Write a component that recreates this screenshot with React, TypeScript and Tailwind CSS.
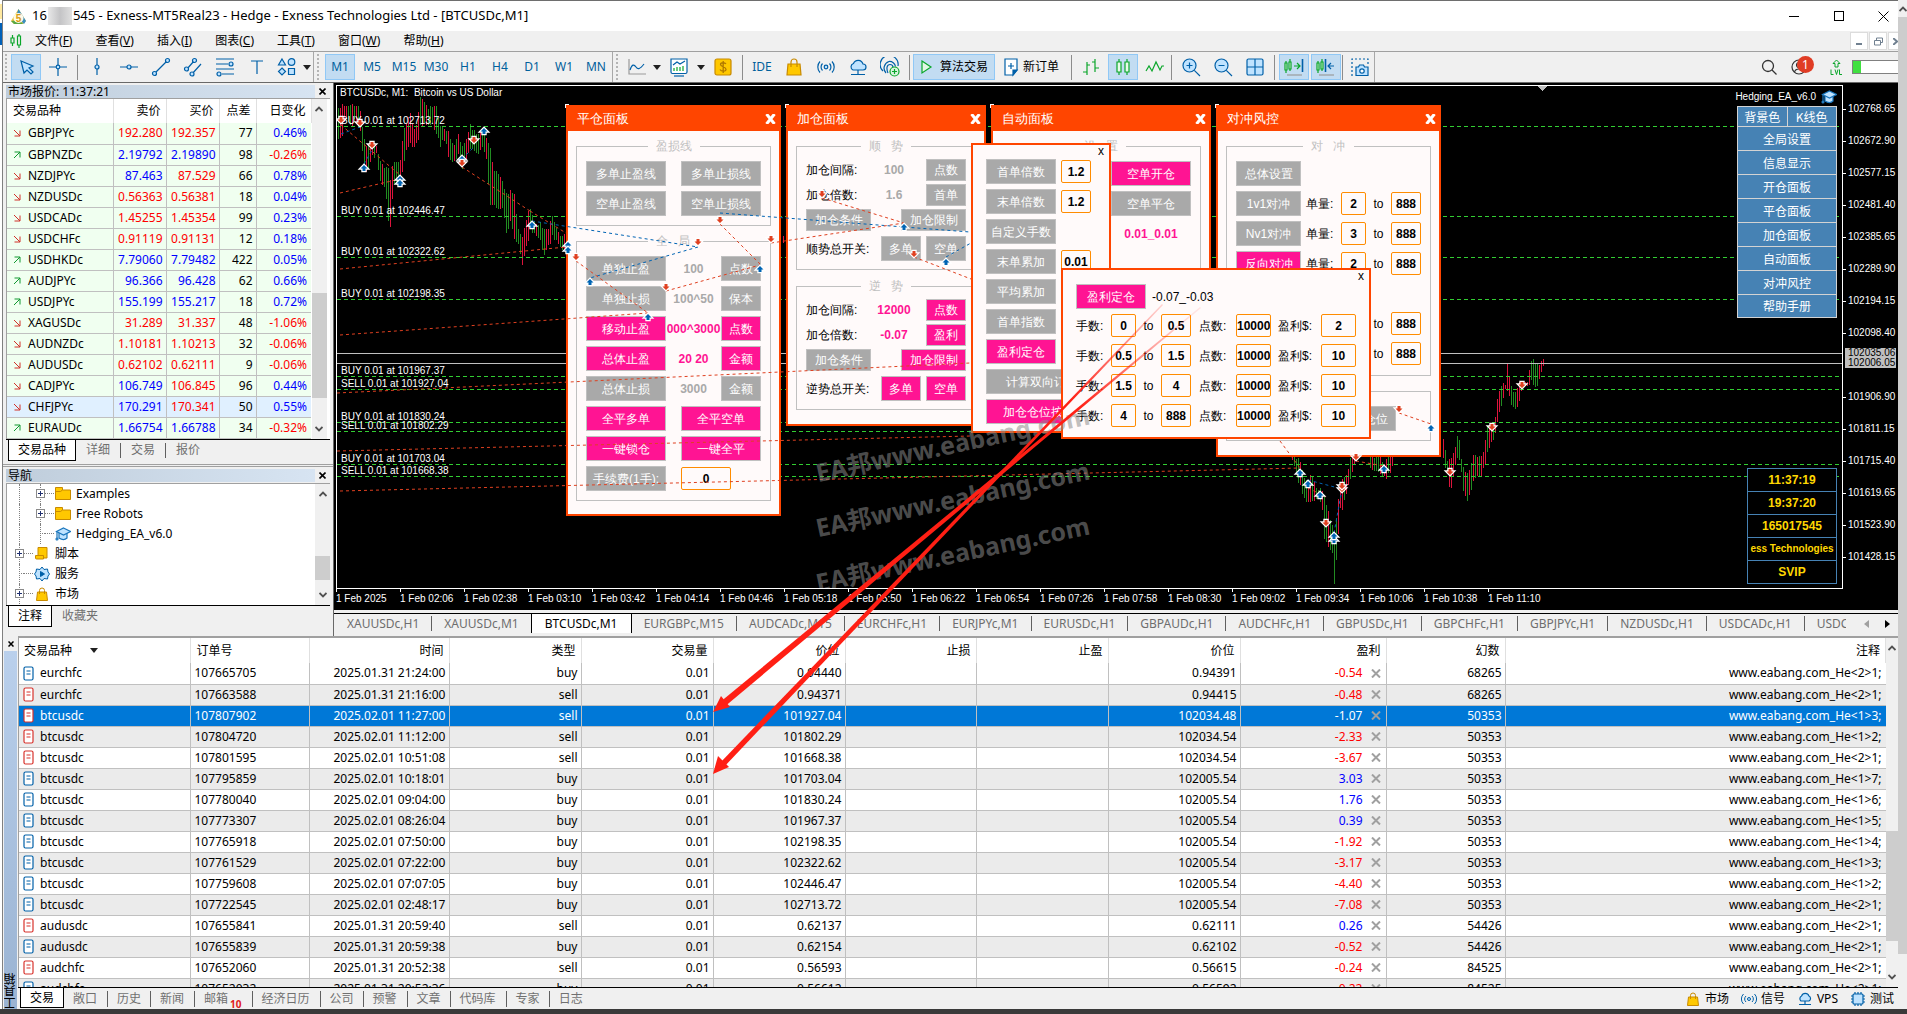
import React from 'react';

const BLUE = '#0060a8';
const PALE = '#bfe3ff';
const GREEN = '#0aa62a';

/* ---------- data ---------- */

type Quote = [string, boolean, string, string, string, string, string, string];
// symbol, rising, bid, ask, spread, change, bid colour, ask colour
const quotes: Quote[] = [
  ['GBPJPYc', false, '192.280', '192.357', '77', '0.46%', 'r', 'r'],
  ['GBPNZDc', true, '2.19792', '2.19890', '98', '-0.26%', 'b', 'b'],
  ['NZDJPYc', false, '87.463', '87.529', '66', '0.78%', 'b', 'r'],
  ['NZDUSDc', false, '0.56363', '0.56381', '18', '0.04%', 'r', 'r'],
  ['USDCADc', false, '1.45255', '1.45354', '99', '0.23%', 'r', 'r'],
  ['USDCHFc', false, '0.91119', '0.91131', '12', '0.18%', 'r', 'r'],
  ['USDHKDc', true, '7.79060', '7.79482', '422', '0.05%', 'b', 'b'],
  ['AUDJPYc', true, '96.366', '96.428', '62', '0.66%', 'b', 'b'],
  ['USDJPYc', true, '155.199', '155.217', '18', '0.72%', 'b', 'b'],
  ['XAGUSDc', false, '31.289', '31.337', '48', '-1.06%', 'r', 'r'],
  ['AUDNZDc', false, '1.10181', '1.10213', '32', '-0.06%', 'r', 'r'],
  ['AUDUSDc', false, '0.62102', '0.62111', '9', '-0.06%', 'r', 'r'],
  ['CADJPYc', false, '106.749', '106.845', '96', '0.44%', 'b', 'r'],
  ['CHFJPYc', false, '170.291', '170.341', '50', '0.55%', 'b', 'r'],
  ['EURAUDc', true, '1.66754', '1.66788', '34', '-0.32%', 'b', 'b'],
];

type Trade = [string, string, string, string, string, string, string, string, string];
// symbol, ticket, time, type, open price, current price, profit, magic, comment suffix
const trades: Trade[] = [
  ['eurchfc', '107665705', '2025.01.31 21:24:00', 'buy', '0.94440', '0.94391', '-0.54', '68265', '<2>1;'],
  ['eurchfc', '107663588', '2025.01.31 21:16:00', 'sell', '0.94371', '0.94415', '-0.48', '68265', '<2>1;'],
  ['btcusdc', '107807902', '2025.02.01 11:27:00', 'sell', '101927.04', '102034.48', '-1.07', '50353', '<1>3;'],
  ['btcusdc', '107804720', '2025.02.01 11:12:00', 'sell', '101802.29', '102034.54', '-2.33', '50353', '<1>2;'],
  ['btcusdc', '107801595', '2025.02.01 10:51:08', 'sell', '101668.38', '102034.54', '-3.67', '50353', '<2>1;'],
  ['btcusdc', '107795859', '2025.02.01 10:18:01', 'buy', '101703.04', '102005.54', '3.03', '50353', '<1>7;'],
  ['btcusdc', '107780040', '2025.02.01 09:04:00', 'buy', '101830.24', '102005.54', '1.76', '50353', '<1>6;'],
  ['btcusdc', '107773307', '2025.02.01 08:26:04', 'buy', '101967.37', '102005.54', '0.39', '50353', '<1>5;'],
  ['btcusdc', '107765918', '2025.02.01 07:50:00', 'buy', '102198.35', '102005.54', '-1.92', '50353', '<1>4;'],
  ['btcusdc', '107761529', '2025.02.01 07:22:00', 'buy', '102322.62', '102005.54', '-3.17', '50353', '<1>3;'],
  ['btcusdc', '107759608', '2025.02.01 07:07:05', 'buy', '102446.47', '102005.54', '-4.40', '50353', '<1>2;'],
  ['btcusdc', '107722545', '2025.02.01 02:48:17', 'buy', '102713.72', '102005.54', '-7.08', '50353', '<2>1;'],
  ['audusdc', '107655841', '2025.01.31 20:59:40', 'sell', '0.62137', '0.62111', '0.26', '54426', '<2>1;'],
  ['audusdc', '107655839', '2025.01.31 20:59:38', 'buy', '0.62154', '0.62102', '-0.52', '54426', '<2>1;'],
  ['audchfc', '107652060', '2025.01.31 20:52:38', 'sell', '0.56593', '0.56615', '-0.24', '84525', '<2>1;'],
  ['audchfc', '107652032', '2025.01.31 20:52:36', 'buy', '0.56612', '0.56592', '-0.22', '84525', '<2>1;'],
];

const orderLines: [number, number, string][] = [
  [127, 125, 'BUY 0.01 at 102713.72'],
  [217, 215, 'BUY 0.01 at 102446.47'],
  [258, 256, 'BUY 0.01 at 102322.62'],
  [300, 298, 'BUY 0.01 at 102198.35'],
  [377, 375, 'BUY 0.01 at 101967.37'],
  [390, 388, 'SELL 0.01 at 101927.04'],
  [423, 421, 'BUY 0.01 at 101830.24'],
  [432, 430, 'SELL 0.01 at 101802.29'],
  [465, 463, 'BUY 0.01 at 101703.04'],
  [477, 475, 'SELL 0.01 at 101668.38'],
];

const priceTicks = [
  '102768.65', '102672.90', '102577.15', '102481.40', '102385.65', '102289.90', '102194.15', '102098.40',
  '', '101906.90', '101811.15', '101715.40', '101619.65', '101523.90', '101428.15',
];

const timeTicks = [
  '1 Feb 2025', '1 Feb 02:06', '1 Feb 02:38', '1 Feb 03:10', '1 Feb 03:42', '1 Feb 04:14', '1 Feb 04:46',
  '1 Feb 05:18', '1 Feb 05:50', '1 Feb 06:22', '1 Feb 06:54', '1 Feb 07:26', '1 Feb 07:58', '1 Feb 08:30',
  '1 Feb 09:02', '1 Feb 09:34', '1 Feb 10:06', '1 Feb 10:38', '1 Feb 11:10',
];

// price envelope: x, high, low
const envelopes: [number, number, number][][] = [
  [
    [338, 107, 140], [342, 105, 139], [345, 107, 120], [350, 103, 130], [355, 108, 123], [357, 103, 120],
    [360, 110, 132], [363, 133, 163], [365, 147, 178], [368, 145, 172], [372, 143, 160], [376, 147, 158],
    [380, 160, 183], [385, 168, 190], [388, 168, 225], [390, 180, 230], [393, 158, 190], [397, 165, 185],
    [400, 160, 187], [403, 130, 167], [406, 122, 152], [410, 113, 147], [413, 130, 152], [417, 120, 147],
    [420, 98, 130], [423, 100, 125], [428, 107, 127], [432, 107, 128], [436, 105, 138], [440, 127, 148],
    [445, 130, 140], [448, 130, 158], [453, 148, 167], [458, 133, 158], [462, 147, 170], [465, 143, 162],
    [470, 123, 150], [473, 130, 152], [477, 135, 158], [481, 130, 152], [485, 137, 153], [490, 147, 207],
    [493, 168, 205], [497, 173, 213], [502, 180, 212], [507, 197, 240], [510, 190, 222], [514, 193, 240],
    [518, 230, 247], [522, 237, 268], [527, 213, 247], [530, 210, 233], [535, 223, 235], [540, 223, 243],
    [543, 230, 260], [548, 227, 250], [552, 217, 240], [557, 230, 243], [562, 237, 253], [566, 230, 253],
  ],
  [
    [1292, 452, 463], [1299, 460, 487], [1305, 480, 503], [1311, 475, 505], [1316, 487, 503], [1321, 490, 503],
    [1324, 497, 540], [1328, 510, 548], [1333, 530, 558], [1334, 540, 588], [1337, 507, 550], [1340, 480, 513],
    [1343, 480, 510], [1347, 473, 490], [1350, 457, 480], [1354, 447, 468],
  ],
  [
    [1370, 455, 470], [1380, 457, 477], [1383, 463, 482], [1389, 457, 477], [1393, 456, 465],
  ],
  [
    [1443, 440, 463], [1447, 460, 475], [1450, 457, 495], [1454, 453, 473], [1458, 430, 457], [1461, 457, 477],
    [1464, 473, 500], [1467, 473, 502], [1470, 467, 495], [1473, 453, 483], [1476, 457, 480], [1481, 455, 480],
    [1484, 448, 470], [1487, 427, 457], [1490, 427, 445], [1494, 422, 440], [1498, 393, 420], [1503, 382, 402],
    [1505, 383, 393], [1507, 365, 392], [1510, 383, 405], [1514, 393, 410], [1518, 383, 408], [1522, 382, 390],
    [1527, 380, 387], [1532, 358, 385], [1536, 363, 390], [1540, 363, 378], [1543, 359, 370],
  ],
];

function buildBars() {
  const bars: { x: number; a: number; b: number; up: boolean }[] = [];
  envelopes.forEach((pts) => {
    const first = pts[0][0];
    const last = pts[pts.length - 1][0];
    let i = 0;
    for (let x = first; x <= last; x += 2) {
      while (i < pts.length - 2 && pts[i + 1][0] < x) i += 1;
      const [x0, h0, l0] = pts[i];
      const [x1, h1, l1] = pts[i + 1];
      const t = Math.min(1, Math.max(0, (x - x0) / (x1 - x0)));
      const mid = (h0 + l0) / 2;
      const falling = (h1 + l1) / 2 > mid;
      const n = (x * 37) % 11;
      const a = Math.round(h0 + (h1 - h0) * t + (n % 4));
      const b = Math.round(l0 + (l1 - l0) * t - ((n * 3) % 5));
      bars.push({ x, a, b: Math.max(b, a + 4), up: n > 7 ? falling : !falling });
    }
  });
  return bars;
}
const bars = buildBars();

type Line = [number, number, number, number, 'r' | 'b'];
const dealLines: Line[] = [
  [341, 126, 400, 176, 'r'], [340, 194, 400, 180, 'r'], [341, 135, 360, 128, 'b'], [364, 165, 372, 151, 'b'],
  [462, 168, 530, 212, 'r'], [530, 212, 566, 234, 'r'], [462, 160, 474, 148, 'b'],
  [340, 270, 566, 248, 'r'], [340, 336, 648, 314, 'r'], [337, 394, 970, 364, 'r'], [337, 452, 971, 437, 'r'],
  [340, 492, 1300, 469, 'r'], [532, 222, 698, 248, 'b'], [698, 248, 590, 279, 'b'], [720, 214, 970, 233, 'b'],
  [720, 225, 760, 265, 'r'], [576, 262, 648, 314, 'r'], [666, 292, 760, 266, 'r'], [771, 244, 904, 224, 'r'],
  [822, 199, 904, 224, 'r'], [914, 258, 971, 280, 'r'], [946, 258, 971, 244, 'b'], [1399, 414, 1431, 425, 'r'],
  [1280, 442, 1300, 469, 'r'], [1356, 462, 1384, 467, 'r'], [1308, 481, 1342, 490, 'b'], [1342, 490, 1334, 534, 'b'],
  [1308, 489, 1326, 498, 'r'],
];

const deals: [number, number, 'r' | 'b'][] = [
  [341, 121, 'r'], [360, 124, 'r'], [372, 146, 'r'], [474, 141, 'r'], [698, 243, 'r'],
  [576, 258, 'r'], [666, 288, 'r'], [720, 221, 'r'], [771, 240, 'r'], [364, 169, 'b'], [400, 180, 'b'],
  [400, 184, 'b'], [462, 160, 'b'], [462, 164, 'r'], [484, 132, 'b'], [532, 226, 'b'], [568, 246, 'b'], [568, 251, 'b'],
  [590, 283, 'b'], [648, 318, 'b'], [760, 270, 'b'], [822, 195, 'r'], [904, 228, 'b'], [914, 255, 'r'],
  [946, 263, 'b'], [1399, 410, 'r'], [1431, 429, 'b'], [1356, 458, 'r'], [1300, 474, 'b'], [1308, 485, 'b'],
  [1320, 496, 'b'], [1326, 524, 'r'], [1334, 541, 'b'], [1334, 537, 'b'], [1342, 490, 'r'], [1342, 487, 'r'],
  [1384, 470, 'b'], [1450, 473, 'r'], [1492, 428, 'r'], [1522, 386, 'r'],
];

/* ---------- icons ---------- */

function Svg({ w = 20, h = 20, children }: { w?: number; h?: number; children: React.ReactNode }) {
  return (
    <svg width={w} height={h} viewBox={`0 0 ${w} ${h}`} fill="none" stroke={BLUE} strokeWidth="1.2" className="shrink-0">
      {children}
    </svg>
  );
}

const Ico = {
  cursor: <Svg><path d="M5 4l3 12 3-3 4 4 2-2-4-4 4-2z" fill={PALE} /></Svg>,
  cross: <Svg><path d="M10 1v7M10 12v7M1 10h7M12 10h7" /><circle cx="10" cy="10" r="1.8" fill={PALE} /></Svg>,
  vline: <Svg><path d="M10 1v7M10 12v6" /><circle cx="10" cy="10" r="2" fill={PALE} /></Svg>,
  hline: <Svg><path d="M1 10h7M12 10h7" /><circle cx="10" cy="10" r="2" fill={PALE} /></Svg>,
  trend: <Svg><path d="M4 16L16 4" /><circle cx="3.5" cy="16.5" r="2" fill={PALE} /><circle cx="16.5" cy="3.5" r="2" fill={PALE} /></Svg>,
  channel: <Svg><path d="M4 12l7-8M9 17l9-10" /><circle cx="3.5" cy="12" r="2" fill={PALE} /><circle cx="11.5" cy="3.5" r="2" fill={PALE} /><circle cx="9" cy="17" r="2" fill={PALE} /></Svg>,
  fibo: <Svg><path d="M1 2h18M1 7h12M1 12h18M7 17h12" /><circle cx="16" cy="7" r="2" fill={PALE} /><circle cx="4" cy="17" r="2" fill={PALE} /></Svg>,
  text: <Svg><path d="M4 4h12M10 4v13" /></Svg>,
  shapes: <Svg><path d="M5 2l3.5 6h-7z" fill={PALE} /><circle cx="14.5" cy="5" r="3.3" fill={PALE} /><path d="M5 11l3.500 3.500L5 18l-3.500-3.500z" fill={PALE} /><path d="M11.500 11.500h6v6h-6z" fill={PALE} /></Svg>,
  linechart: <Svg><path d="M2 2v15h17" stroke="#9a9a9a" /><path d="M3 13c2-6 4-6 6-3s4 2 8-3" /></Svg>,
  indicator: <Svg><path d="M2 2h16v13a1.500 1.500 0 0 1-1.500 1.500h-13A1.500 1.500 0 0 1 2 15z" fill="#fff" /><path d="M4 8l4-3 3 2 5-3" /><path d="M5 14v-3M8 14v-4M11 14v-4M14 14V9" stroke={GREEN} /><path d="M5 19h10" /></Svg>,
  dollar: <Svg><rect x="2" y="2" width="16" height="16" rx="2" fill="#ffc800" stroke="#c88a00" /><path d="M13 7c-1-1.500-5.500-2-5.500.500S13 9.500 13 12.300s-5 2-6 .200M10.200 4v12" stroke="#b07800" strokeWidth="1.300" /></Svg>,
  bag: <Svg w={16}><path d="M2 7h12l1 11H1z" fill="#ffc800" stroke="#c88a00" /><path d="M5 10V5a3 3 0 0 1 6 0v5" stroke="#c88a00" /></Svg>,
  signal: <Svg><circle cx="10" cy="10" r="1.800" fill={PALE} /><path d="M6.500 6.500a5 5 0 0 0 0 7M13.500 6.500a5 5 0 0 1 0 7M4 4.500a8 8 0 0 0 0 11M16 4.500a8 8 0 0 1 0 11" /></Svg>,
  cloud: <Svg><path d="M5 13a3.500 3.500 0 0 1 .500-6.500 5 5 0 0 1 9.500.500 3 3 0 0 1 0 6z" fill={PALE} /><path d="M10 13v4M3 17.500h14" /></Svg>,
  finger: <Svg><path d="M3 14a9 9 0 1 1 15-5M6 16A7 7 0 0 1 9 4.500a6 6 0 0 1 6.500 5M8 16c-2-5-1-8.500 2-8.500 2 0 3 1 3 3" /><circle cx="14.500" cy="14.500" r="4.500" fill="#d9f5df" stroke={GREEN} /><path d="M14.500 12v5M12 14.500h5" stroke={GREEN} /></Svg>,
  play: <Svg w={16}><path d="M4 4l9 6-9 6z" fill="#e4f8e4" stroke={GREEN} /></Svg>,
  order: <Svg w={16}><path d="M2 2h12v11l-4 5H2z" fill="#fff" /><path d="M10 18v-5h4z" fill={BLUE} /><path d="M8 6v6M5 9h6" /></Svg>,
  bars: <Svg><path d="M6 5v13M6 15H2M6 8h3M14 2v13M14 5h-3M14 11h4" stroke={GREEN} /></Svg>,
  candles: <Svg><path d="M6 2v16M14 2v16" stroke={GREEN} /><path d="M4 5h4v10H4zM12 5h4v10h-4z" fill="#e9fbe9" stroke={GREEN} /></Svg>,
  zigzag: <Svg><path d="M1 14l3-5 3 5 4-9 4 8 2-4h2" stroke={GREEN} /></Svg>,
  zoomIn: <Svg><circle cx="8.500" cy="8.500" r="6.500" fill={PALE} /><path d="M13.300 13.300L19 19M5.500 8.500h6M8.500 5.500v6" /></Svg>,
  zoomOut: <Svg><circle cx="8.500" cy="8.500" r="6.500" fill={PALE} /><path d="M13.300 13.300L19 19M5.500 8.500h6" /></Svg>,
  grid: <Svg><rect x="2" y="2" width="16" height="16" rx="1.500" fill={PALE} /><path d="M10 2v16M2 10h16" /></Svg>,
  scrollEnd: <Svg w={22}><path d="M3 4v12M7 2v12" stroke={GREEN} /><path d="M2 6h2v7H2zM6 5h2v7H6z" fill="#e9fbe9" stroke={GREEN} /><path d="M11 9h6M14 6l3 3-3 3" stroke={GREEN} /><path d="M19.500 2v13" strokeWidth="1.600" /><path d="M4 18h15" stroke="#9a9a9a" /></Svg>,
  shift: <Svg w={22}><path d="M3 4v12M7 2v12" stroke={GREEN} /><path d="M2 6h2v7H2zM6 5h2v7H6z" fill="#e9fbe9" stroke={GREEN} /><path d="M10.500 2v13" strokeWidth="1.600" /><path d="M13 9h6M16 6l-3 3 3 3" /><path d="M4 18h15" stroke="#9a9a9a" /></Svg>,
  camera: <Svg><path d="M2 19V2h16v5" strokeDasharray="2 2" /><path d="M6 10h2.500l1-2h4l1 2H18v8.500H6z" fill={PALE} /><circle cx="12" cy="14" r="2.200" fill="#fff" /></Svg>,
};

function CapIcon() {
  return (
    <svg width="16" height="14" viewBox="0 0 16 14" fill={PALE} stroke="#1a76bd" strokeWidth="1.2" className="shrink-0">
      <path d="M4 6v5c3 2 6 2 8 0V6" />
      <path d="M8.500 1L15.500 4.500 8.500 8 1.500 4.500z" />
      <path d="M2 5v6" />
      <circle cx="2" cy="12" r="1" />
    </svg>
  );
}
function FolderIcon() {
  return (
    <svg width="16" height="13" viewBox="0 0 16 13" fill="#ffc800" stroke="#c88a00" className="shrink-0">
      <path d="M.500.500h7v2.500h8v9.500h-15z" />
      <path d="M.500 4.500h5l2-1.500" fill="none" />
    </svg>
  );
}
function ScriptIcon() {
  return (
    <svg width="14" height="13" viewBox="0 0 14 13" fill="#ffc800" stroke="#c88a00" className="shrink-0">
      <path d="M3 .500h9V11H3z" />
      <path d="M.500 8.500h8V12h-7a1 1 0 0 1-1-1z" />
    </svg>
  );
}
function ServiceIcon() {
  return (
    <svg width="16" height="16" viewBox="0 0 16 16" fill={PALE} stroke={BLUE} className="shrink-0">
      <path d="M8 1l2 2.500 3.500-.500.500 3L15.500 8 14 10l-.500 3-3.500-.500L8 15l-2-2.500-3.500.500L2 10 .500 8 2 6l.500-3 3.500.500z" />
      <path d="M6.500 5.500l4 2.500-4 2.500z" fill={BLUE} />
    </svg>
  );
}
function SmallBag() {
  return (
    <svg width="12" height="14" viewBox="0 0 12 14" fill="#ffc800" stroke="#c88a00" className="shrink-0">
      <path d="M1.500 5h9l1 8.500H.500z" />
      <path d="M3.500 7V3.500a2.500 2.500 0 0 1 5 0V7" fill="none" />
    </svg>
  );
}
function ChipIcon() {
  return (
    <svg width="16" height="16" viewBox="0 0 16 16" fill={PALE} stroke={BLUE} strokeWidth="1.200" className="shrink-0">
      <path d="M5 1v14M8 1v14M11 1v14M1 5h14M1 8h14M1 11h14" />
      <rect x="3" y="3" width="10" height="10" rx="1" />
    </svg>
  );
}
function DocIcon({ sell }: { sell: boolean }) {
  const c = sell ? '#d8322c' : BLUE;
  return (
    <svg width="11" height="15" viewBox="0 0 11 15" fill="#fff" stroke={c} strokeWidth="1.200" className="shrink-0">
      <rect x="1" y="1" width="9" height="13" rx="1.500" />
      <path d="M3.500 5h4M3.500 8h4" />
    </svg>
  );
}
function Chevron({ up }: { up?: boolean }) {
  return (
    <svg width="8" height="6" viewBox="0 0 8 6" fill="none" stroke="#505050" strokeWidth="1.800">
      <path d={up ? 'M.500 5L4 1.500 7.500 5' : 'M.500 1L4 4.500 7.500 1'} />
    </svg>
  );
}
function Caret() {
  return (
    <svg width="8" height="5" viewBox="0 0 8 5" fill="#202020">
      <path d="M0 0h8L4 5z" />
    </svg>
  );
}
function Marker({ x, y, kind }: { x: number; y: number; kind: 'r' | 'b' }) {
  const down = 'M-1.500-3h3v2.500h2L0 3-3.500-.500h2z';
  const up = 'M-1.500 3h3V.500h2L0-3-3.500.500h2z';
  return (
    <path
      d={kind === 'r' ? down : up}
      transform={`translate(${x} ${y})`}
      fill={kind === 'r' ? '#e04020' : '#0064b4'}
      stroke="#fff"
      strokeWidth="2.400"
      paintOrder="stroke"
    />
  );
}

/* ---------- window chrome ---------- */

function TitleBar() {
  return (
    <header className="flex h-[31px] shrink-0 items-center border-t border-[#6e6e6e] bg-white pl-[7px] text-[13px] text-black">
      <svg width="17" height="17" viewBox="0 0 17 17" className="mr-[5px]">
        <path d="M8.500 1L16 13l-3 3H4l-3-3z" fill="#e8c440" />
        <path d="M8.500 1L16 13l-2 3-8-8z" fill="#3a8fc0" />
        <path d="M1 13l3 3h9l-4-4z" fill="#5aa844" />
        <circle cx="8.500" cy="10" r="5" fill="#fffbe8" />
        <text x="8.500" y="14" textAnchor="middle" fontSize="10" fontWeight="700" fill="#d89a10" fontFamily="Liberation Sans">5</text>
      </svg>
      <h1 className="flex items-center whitespace-pre">
        16
        <span className="mx-px h-[18px] w-[24px] bg-linear-to-r from-[#e8e8e8] via-[#c4c4c6] to-[#e0e0e0]" />
        545 - Exness-MT5Real23 - Hedge - Exness Technologies Ltd - [BTCUSDc,M1]
      </h1>
      <div className="ml-auto flex">
        <button aria-label="最小化" className="flex h-7 w-[45px] items-center justify-center">
          <span className="h-px w-[10px] bg-black" />
        </button>
        <button aria-label="最大化" className="flex h-7 w-[45px] items-center justify-center">
          <span className="size-[10px] border border-black" />
        </button>
        <button aria-label="关闭" className="flex h-7 w-[37px] items-center justify-center pl-2">
          <svg width="11" height="11" viewBox="0 0 11 11" stroke="#000"><path d="M.500.500l10 10M10.500.500l-10 10" /></svg>
        </button>
      </div>
    </header>
  );
}

const menus = [['文件', 'F'], ['查看', 'V'], ['插入', 'I'], ['图表', 'C'], ['工具', 'T'], ['窗口', 'W'], ['帮助', 'H']];

function MenuBar() {
  return (
    <nav className="flex h-[21px] shrink-0 items-center border-b border-[#a0a0a0] bg-[#f0f0f0] pl-[7px] text-xs text-black">
      <svg width="12" height="14" viewBox="0 0 12 14" fill="none" stroke={GREEN} strokeWidth="1.200" className="mr-[13px]">
        <path d="M2.500 1v3M2.500 9v3M9 0v2M9 11v3M1 4h3v5H1zM7.500 2h3v9h-3z" />
      </svg>
      <div className="flex gap-[23px]">
        {menus.map(([t, k]) => (
          <button key={k}>{t}(<u>{k}</u>)</button>
        ))}
      </div>
      <div className="ml-auto flex gap-px">
        <button aria-label="最小化图表" className="flex h-[18px] w-[18px] items-end justify-center border border-[#dcdcdc] bg-white pb-1">
          <span className="h-[2px] w-[6px] bg-[#708090]" />
        </button>
        <button aria-label="还原图表" className="flex h-[18px] w-[18px] items-center justify-center border border-[#dcdcdc] bg-white">
          <svg width="9" height="9" viewBox="0 0 9 9" fill="none" stroke="#708090"><path d="M2.500 3V1h6v4.500H6.500M.500 3.500h6v4.500h-6z" /></svg>
        </button>
        <button aria-label="关闭图表" className="flex h-[18px] w-[10px] items-center justify-end overflow-hidden border border-r-0 border-[#dcdcdc] bg-white">
          <svg width="5" height="7" viewBox="0 0 5 7" stroke="#708090" strokeWidth="2"><path d="M0 0l4 3.500L0 7" fill="none" /></svg>
        </button>
      </div>
    </nav>
  );
}

function ToolButton({ label, on, narrow, children }: { label: string; on?: boolean; narrow?: boolean; children: React.ReactNode }) {
  return (
    <button
      aria-label={label}
      className={`flex h-[26px] shrink-0 items-center justify-center ${narrow ? 'w-[28px]' : 'mx-px w-[30px]'} ${on ? 'border border-[#90c8f6] bg-[#c2dcf2]' : ''}`}
    >
      {children}
    </button>
  );
}
const Sep = () => <span className="mx-[3px] h-[25px] w-px shrink-0 bg-[#8c8c8c]" />;
const Grip = ({ first }: { first?: boolean }) => (
  <span className={`flex h-[30px] shrink-0 items-center ${first ? 'w-[7px] pl-[2px]' : 'w-[11px] border-l border-[#a8a8a8] pl-[3px]'}`}>
    <span className="h-[26px] border-l-2 border-dotted border-[#b4b4b4]" />
  </span>
);
const DropArrow = ({ label }: { label: string }) => (
  <button aria-label={label} className="flex h-[26px] w-3 shrink-0 items-center justify-center"><Caret /></button>
);

function Toolbar() {
  return (
    <div className="flex h-[31px] shrink-0 items-center border-b border-[#696969] bg-[#f0f0f0] text-xs">
      <Grip first />
      <ToolButton label="光标" on>{Ico.cursor}</ToolButton>
      <ToolButton label="十字线">{Ico.cross}</ToolButton>
      <Sep />
      <ToolButton label="垂直线">{Ico.vline}</ToolButton>
      <ToolButton label="水平线">{Ico.hline}</ToolButton>
      <ToolButton label="趋势线">{Ico.trend}</ToolButton>
      <ToolButton label="通道">{Ico.channel}</ToolButton>
      <ToolButton label="斐波那契">{Ico.fibo}</ToolButton>
      <ToolButton label="文本">{Ico.text}</ToolButton>
      <ToolButton label="图形" narrow>{Ico.shapes}</ToolButton>
      <DropArrow label="更多图形" />
      <Grip />
      {['M1', 'M5', 'M15', 'M30', 'H1', 'H4', 'D1', 'W1', 'MN'].map((t) => (
        <ToolButton key={t} label={t} on={t === 'M1'}>
          <span className="text-[#00609c]">{t}</span>
        </ToolButton>
      ))}
      <Grip />
      <ToolButton label="图表类型" narrow>{Ico.linechart}</ToolButton>
      <DropArrow label="图表类型列表" />
      <ToolButton label="指标">{Ico.indicator}</ToolButton>
      <DropArrow label="指标列表" />
      <ToolButton label="品种">{Ico.dollar}</ToolButton>
      <Sep />
      <ToolButton label="IDE"><span className="text-[#00609c]">IDE</span></ToolButton>
      <ToolButton label="市场">{Ico.bag}</ToolButton>
      <ToolButton label="信号">{Ico.signal}</ToolButton>
      <ToolButton label="VPS">{Ico.cloud}</ToolButton>
      <ToolButton label="社区">{Ico.finger}</ToolButton>
      <Sep />
      <button className="flex h-[26px] w-[82px] shrink-0 items-center gap-[6px] border border-[#90c8f6] bg-[#c2dcf2] pl-[4px] text-black">
        {Ico.play}算法交易
      </button>
      <button className="flex h-[26px] w-[73px] shrink-0 items-center gap-1 pl-2 text-black">{Ico.order}新订单</button>
      <Sep />
      <ToolButton label="柱状图">{Ico.bars}</ToolButton>
      <ToolButton label="蜡烛图" on>{Ico.candles}</ToolButton>
      <ToolButton label="线形图">{Ico.zigzag}</ToolButton>
      <span className="mr-[3px] h-[25px] w-px shrink-0 bg-[#8c8c8c]" />
      <ToolButton label="放大">{Ico.zoomIn}</ToolButton>
      <ToolButton label="缩小">{Ico.zoomOut}</ToolButton>
      <ToolButton label="平铺">{Ico.grid}</ToolButton>
      <Sep />
      <ToolButton label="滚动到末尾" on>{Ico.scrollEnd}</ToolButton>
      <ToolButton label="图表移位" on>{Ico.shift}</ToolButton>
      <span className="mr-[3px] h-[25px] w-px shrink-0 bg-[#8c8c8c]" />
      <ToolButton label="截图" narrow>{Ico.camera}</ToolButton>
      <span className="h-[30px] w-px shrink-0 bg-[#a8a8a8]" />
      <div className="ml-auto flex h-full items-center">
        <button aria-label="搜索" className="mr-[13px]">
          <svg width="16" height="16" viewBox="0 0 16 16" fill="none" stroke="#333" strokeWidth="1.300"><circle cx="7" cy="7" r="5.500" /><path d="M11 11l4.500 4.500" /></svg>
        </button>
        <button aria-label="账户通知" className="relative mr-[22px]">
          <svg width="18" height="18" viewBox="0 0 18 18" fill="none" stroke="#333" strokeWidth="1.200"><circle cx="9" cy="9" r="7" /><circle cx="9" cy="7" r="2.500" /><path d="M4.500 14c1-4 8-4 9 0" /></svg>
          <span className="absolute -top-[2px] left-[7px] flex size-[17px] items-center justify-center rounded-full bg-[#e03c24] text-white">1</span>
        </button>
        <svg width="13" height="17" viewBox="0 0 13 17" fill="none" stroke={GREEN} className="mr-[9px]">
          <path d="M6.500 1l3.500 3.500H8V8H5V4.500H3zM1 10.500v5h2.500M5 10.500l1.500 5 1.500-5M9.500 10.500v5H12" />
        </svg>
        <div className="h-[14px] w-[46px] border border-r-0 border-[#808080] bg-white">
          <div className="h-full w-2 bg-[#40e040]" />
        </div>
      </div>
    </div>
  );
}

/* ---------- left column ---------- */

function PaneHeader({ title }: { title: string }) {
  return (
    <div className="flex h-[14px] items-center">
      <h2 className="flex h-[13px] flex-1 items-center bg-linear-to-r from-[#bfcddb] to-[#d7e4f2] pl-[2px] text-xs leading-[13px] text-black">{title}</h2>
      <button aria-label={`关闭${title}`} className="flex w-[15px] justify-center text-black">
        <svg width="7" height="7" viewBox="0 0 7 7" stroke="#000" strokeWidth="1.600"><path d="M.500.500l6 6M6.500.500l-6 6" /></svg>
      </button>
    </div>
  );
}

function Scroll({ children }: { children?: React.ReactNode }) {
  return (
    <div className="flex w-[15px] shrink-0 flex-col items-center bg-[#f0f0f0] py-[7px]">
      <Chevron up />
      <div className="flex w-full flex-1 flex-col">{children}</div>
      <Chevron />
    </div>
  );
}

function PaneTabs({ tabs }: { tabs: string[] }) {
  return (
    <div className="flex h-[22px] shrink-0 border-t border-black text-xs text-[#707070]">
      <button className="ml-[2px] h-[21px] border border-t-0 border-black bg-white px-[9px] text-black">{tabs[0]}</button>
      {tabs.slice(1).map((t, i) => (
        <span key={t} className={`my-[3px] flex items-center ${i > 0 ? 'border-l border-[#606060]' : ''}`}>
          <button className="px-[10px]">{t}</button>
        </span>
      ))}
    </div>
  );
}

const tone = (c: string) => (c === 'r' ? 'text-[#ff0000]' : 'text-[#0000ff]');

function MarketWatch() {
  return (
    <section className="border-b border-[#a0a0a0] px-[3px] pt-px pb-[3px]">
      <PaneHeader title="市场报价: 11:37:21" />
      <div className="flex border-t border-l border-[#a0a0a0] bg-white">
        <table className="w-[304px] table-fixed border-collapse text-xs leading-4 text-black">
          <colgroup>
            <col className="w-[106px]" /><col className="w-[53px]" /><col className="w-[53px]" /><col className="w-[37px]" /><col className="w-[55px]" />
          </colgroup>
          <thead>
            <tr className="h-6">
              <th className="border-r border-[#e0e0e0] pl-[6px] text-left font-normal">交易品种</th>
              <th className="border-r border-[#e0e0e0] pr-[5px] text-right font-normal">卖价</th>
              <th className="border-r border-[#e0e0e0] pr-[5px] text-right font-normal">买价</th>
              <th className="border-r border-[#e0e0e0] pr-[5px] text-right font-normal">点差</th>
              <th className="border-r border-[#e0e0e0] pr-[5px] text-right font-normal">日变化</th>
            </tr>
          </thead>
          <tbody>
            {quotes.map(([s, up, bid, ask, sp, ch, cb, ca]) => (
              <tr key={s} className={`h-[21px] border-b border-[#c0c0c0] ${s === 'CHFJPYc' ? 'bg-[#e0f0ff]' : 'bg-[#f0fff0]'}`}>
                <td className="border-r border-[#c0c0c0]">
                  <span className="flex items-center pl-[6px]">
                    <svg width="8" height="8" viewBox="0 0 8 8" fill="none" stroke={up ? '#109830' : '#d03028'} className="mr-[7px]">
                      <path d={up ? 'M1 7l6-6M1.500 1H7v5.500' : 'M1 1l6 6M7 1.500V7H1.500'} />
                    </svg>
                    {s}
                  </span>
                </td>
                <td className={`border-r border-[#c0c0c0] pr-[3px] text-right ${tone(cb)}`}>{bid}</td>
                <td className={`border-r border-[#c0c0c0] pr-[3px] text-right ${tone(ca)}`}>{ask}</td>
                <td className="border-r border-[#c0c0c0] pr-[3px] text-right">{sp}</td>
                <td className={`pr-1 text-right ${ch.startsWith('-') ? 'text-[#ff0000]' : 'text-[#0000ff]'}`}>{ch}</td>
              </tr>
            ))}
          </tbody>
        </table>
        <Scroll>
          <div className="flex-[180]" />
          <div className="w-full flex-[104] bg-[#cdcdcd]" />
          <div className="flex-[27]" />
        </Scroll>
      </div>
      <PaneTabs tabs={['交易品种', '详细', '交易', '报价']} />
    </section>
  );
}

function Plus() {
  return (
    <svg width="9" height="9" viewBox="0 0 9 9" fill="#fff" className="shrink-0"><rect x=".500" y=".500" width="8" height="8" stroke="#8a8a8a" /><path d="M2 4.500h5M4.500 2v5" stroke="#203070" /></svg>
  );
}

function TreeRow({ deep, plus, icon, text }: { deep?: boolean; plus?: boolean; icon: React.ReactNode; text: string }) {
  return (
    <li className="flex h-5 items-center">
      <span className={`ml-3 self-stretch border-l border-dotted border-[#808080] ${deep ? 'mr-[20px]' : ''}`} />
      {deep && <span className="self-stretch border-l border-dotted border-[#808080]" />}
      <span className="-ml-[5px] flex w-[18px] items-center">
        {plus ? <Plus /> : <span className="ml-1 w-[5px] border-t border-dotted border-[#808080]" />}
        <span className="flex-1 border-t border-dotted border-[#808080]" />
      </span>
      <span className="flex w-[17px] justify-center">{icon}</span>
      <button className="ml-[5px]">{text}</button>
    </li>
  );
}

function Navigator() {
  return (
    <section className="flex flex-1 flex-col border-t border-[#a0a0a0] px-[3px] pt-[2px]">
      <PaneHeader title="导航" />
      <div className="flex h-[122px] border-t border-l border-[#a0a0a0] bg-white">
        <ul className="flex-1 text-xs text-black">
          <TreeRow deep plus icon={<FolderIcon />} text="Examples" />
          <TreeRow deep plus icon={<FolderIcon />} text="Free Robots" />
          <TreeRow deep icon={<CapIcon />} text="Hedging_EA_v6.0" />
          <TreeRow plus icon={<ScriptIcon />} text="脚本" />
          <TreeRow icon={<ServiceIcon />} text="服务" />
          <TreeRow plus icon={<SmallBag />} text="市场" />
        </ul>
        <Scroll>
          <div className="flex-[60]" />
          <div className="w-full flex-[24] bg-[#cdcdcd]" />
          <div className="flex-[12]" />
        </Scroll>
      </div>
      <PaneTabs tabs={['注释', '收藏夹']} />
    </section>
  );
}

/* ---------- floating chart panels ---------- */

function Btn({ children, on, size }: { children: React.ReactNode; on?: boolean; size: string }) {
  return (
    <button className={`flex shrink-0 items-center justify-center overflow-hidden border border-[#c0c0c0] text-xs whitespace-nowrap text-white ${size} ${on ? 'bg-[#ff1493]' : 'bg-[#a9a9a9]'}`}>
      {children}
    </button>
  );
}

function Field({ value, label, size }: { value: string; label: string; size: string }) {
  return (
    <input
      aria-label={label}
      defaultValue={value}
      className={`h-[23px] shrink-0 rounded-[2px] border border-[#ff8c00] bg-[#fffafa] p-0 text-center font-[family-name:'Liberation_Sans',sans-serif] text-xs font-bold text-black ${size}`}
    />
  );
}

function Plain({ value, label, on }: { value: string; label: string; on?: boolean }) {
  return (
    <input
      aria-label={label}
      defaultValue={value}
      className={`h-[22px] w-[54px] shrink-0 bg-transparent p-0 text-center font-[family-name:'Liberation_Sans',sans-serif] text-xs font-bold ${on ? 'text-[#ff1493]' : 'text-[#a9a9a9]'}`}
    />
  );
}

function Group({ title, children, className }: { title: string; children: React.ReactNode; className: string }) {
  return (
    <fieldset className={`min-w-0 border border-[#c0c0c0] px-[9px] ${className}`}>
      <legend className="mx-auto px-2 text-xs leading-4 whitespace-pre text-[#c0c0c0]">{title}</legend>
      {children}
    </fieldset>
  );
}

function Panel({ title, className, children }: { title: string; className: string; children: React.ReactNode }) {
  return (
    <section className={`absolute border-2 border-[#ff4500] bg-[#fffafa] ${className}`}>
      <span className="absolute -top-[3px] -left-[3px] size-1 border-t border-l border-white" />
      <header className="flex h-6 items-center justify-between bg-[#ff4500] pr-[3px] pl-[9px] text-[13px] text-white">
        <h3>{title}</h3>
        <button aria-label={`关闭${title}`}>
          <svg width="11" height="10" viewBox="0 0 11 10" fill="none" stroke="#fff" strokeWidth="3"><path d="M1.500 0l8 10M9.500 0l-8 10" /></svg>
        </button>
      </header>
      <div className="px-[8px] pt-[7px]">{children}</div>
    </section>
  );
}

function ClosePanel() {
  const rows: [string, string, string, boolean][] = [
    ['单独止盈', '100', '点数', false],
    ['单独止损', '100^50', '保本', false],
    ['移动止盈', '000^3000', '点数', true],
    ['总体止盈', '20 20', '金额', true],
    ['总体止损', '3000', '金额', false],
  ];
  return (
    <Panel title="平仓面板" className="top-[19px] left-[229px] w-[215px] pb-[13px]">
      <Group title="盈损线" className="pt-[7px] pb-[9px]">
        <div className="grid grid-cols-[80px_80px] justify-between gap-y-[5px]">
          {['多单止盈线', '多单止损线', '空单止盈线', '空单止损线'].map((t) => <Btn key={t} size="h-[25px]">{t}</Btn>)}
        </div>
      </Group>
      <Group title="全   局" className="mt-[7px] pt-[7px] pb-[9px]">
        <div className="flex flex-col gap-[5px]">
          {rows.map(([a, v, b, on]) => (
            <div key={a} className="flex h-[25px] items-center justify-between">
              <Btn size="h-[25px] w-[80px]" on={on}>{a}</Btn>
              <Plain value={v} label={a} on={on} />
              <Btn size="h-[25px] w-[40px]" on={on}>{b}</Btn>
            </div>
          ))}
          <div className="flex justify-between"><Btn on size="h-[25px] w-[80px]">全平多单</Btn><Btn on size="h-[25px] w-[80px]">全平空单</Btn></div>
          <div className="flex justify-between"><Btn on size="h-[25px] w-[80px]">一键锁仓</Btn><Btn on size="h-[25px] w-[80px]">一键全平</Btn></div>
          <div className="flex items-center gap-[15px]"><Btn size="h-[25px] w-[80px]">手续费(1手):</Btn><Field label="手续费" value="0" size="w-[50px]" /></div>
        </div>
      </Group>
    </Panel>
  );
}

function AddGroup({ title, gap, mult, unit, on, name, className }: { title: string; gap: string; mult: string; unit: string; on?: boolean; name: string; className: string }) {
  return (
    <Group title={title} className={className}>
      <div className="flex flex-col gap-[3px] text-xs text-black">
        <div className="flex h-[22px] items-center justify-between">加仓间隔:<span className="flex gap-[5px]"><Plain on={on} value={gap} label="加仓间隔" /><Btn on={on} size="h-[22px] w-[40px]">点数</Btn></span></div>
        <div className="flex h-[22px] items-center justify-between">加仓倍数:<span className="flex gap-[5px]"><Plain on={on} value={mult} label="加仓倍数" /><Btn on={on} size="h-[22px] w-[40px]">{unit}</Btn></span></div>
        <div className="flex justify-between"><Btn size="h-[22px] w-[65px]">加仓条件</Btn><Btn on={on} size="h-[22px] w-[65px]">加仓限制</Btn></div>
        <div className="mt-[2px] flex items-center justify-between">{name}:<span className="flex gap-[5px]"><Btn on={on} size="h-[25px] w-[40px]">多单</Btn><Btn on={on} size="h-[25px] w-[40px]">空单</Btn></span></div>
      </div>
    </Group>
  );
}

function HedgeRow({ name, from, on }: { name: string; from: string; on?: boolean }) {
  return (
    <div className="flex h-[25px] items-center">
      <Btn on={on} size="h-[25px] w-[65px]">{name}</Btn>
      <span className="ml-[5px] w-[35px]">单量:</span>
      <Field label={`${name}起始单量`} value={from} size="w-[25px]" />
      <span className="w-[25px] text-center">to</span>
      <Field label={`${name}截止单量`} value="888" size="w-[30px]" />
    </div>
  );
}

function FloatingPanels() {
  return (
    <>
      <ClosePanel />
      <Panel title="加仓面板" className="top-[19px] left-[449px] w-[200px] pb-[14px]">
        <AddGroup title="顺   势" gap="100" mult="1.6" unit="首单" name="顺势总开关" className="pt-[5px] pb-[8px]" />
        <AddGroup title="逆   势" gap="12000" mult="-0.07" unit="盈利" name="逆势总开关" on className="mt-2 pt-[5px] pb-[8px]" />
      </Panel>
      <Panel title="自动面板" className="top-[19px] left-[654px] w-[220px] pb-[14px]">
        <Group title="设   置" className="h-[272px] pt-[7px]">
          <div className="flex flex-col items-end gap-[5px]">
            <Btn on size="h-[25px] w-[80px]">空单开仓</Btn>
            <Btn size="h-[25px] w-[80px]">空单平仓</Btn>
            <input
              aria-label="手数范围"
              defaultValue="0.01_0.01"
              className="h-[25px] w-[80px] bg-transparent p-0 text-center font-[family-name:'Liberation_Sans',sans-serif] text-xs font-bold text-[#ff1493]"
            />
          </div>
        </Group>
      </Panel>
      <Panel title="对冲风控" className="top-[19px] left-[879px] w-[225px] pb-[14px]">
        <Group title="对   冲" className="pt-[7px] pb-[9px]">
          <div className="flex flex-col gap-[5px] text-xs text-black">
            <Btn size="h-[25px] w-[65px]">总体设置</Btn>
            <HedgeRow name="1v1对冲" from="2" />
            <HedgeRow name="Nv1对冲" from="3" />
            <HedgeRow name="反向对冲" from="2" on />
            <Btn size="h-[25px] w-[65px]">对冲设置</Btn>
            <HedgeRow name="对冲" from="2" />
            <HedgeRow name="反向" from="2" />
          </div>
        </Group>
        <Group title="仓   位" className="mt-[7px] pt-[7px] pb-[9px]">
          <div className="flex pl-[95px]"><Btn size="h-[25px] w-[65px]">对冲仓位</Btn></div>
        </Group>
      </Panel>
    </>
  );
}

function Popups() {
  const options: [string, string, boolean][] = [
    ['首单倍数', '1.2', false], ['末单倍数', '1.2', false], ['自定义手数', '', false], ['末单累加', '0.01', false],
    ['平均累加', '', false], ['首单指数', '', false], ['盈利定仓', '', true],
  ];
  const steps: [string, string, string][] = [['0', '0.5', '2'], ['0.5', '1.5', '10'], ['1.5', '4', '10'], ['4', '888', '10']];
  return (
    <>
      <section className="absolute top-[57px] left-[634px] h-[290px] w-[140px] border-2 border-[#ff4500] bg-[#fffafa] px-[13px] pt-[14px]">
        <button aria-label="关闭倍数设置" className="absolute top-0 right-[5px] text-xs leading-3 text-black">x</button>
        <div className="flex flex-col gap-[5px]">
          {options.map(([t, v, on]) => (
            <div key={t} className="flex items-center gap-[5px]">
              <Btn on={on} size="h-[25px] w-[70px]">{t}</Btn>
              {v && <Field label={t} value={v} size="w-[30px]" />}
            </div>
          ))}
          <Btn size="h-[25px] w-[100px]">计算双向订</Btn>
          <Btn on size="h-[25px] w-[105px]">加仓仓位按位</Btn>
        </div>
      </section>
      <section className="absolute top-[182px] left-[724px] h-[171px] w-[310px] border-2 border-[#ff4500] bg-[#fffafa] px-[13px] pt-[14px]">
        <button aria-label="关闭盈利定仓" className="absolute top-0 right-[5px] text-xs leading-3 text-black">x</button>
        <div className="flex items-center gap-[6px] text-xs text-black"><Btn on size="h-[25px] w-[70px]">盈利定仓</Btn>-0.07_-0.03</div>
        <div className="mt-[5px] flex flex-col gap-[7px] text-xs text-black">
          {steps.map(([a, b, p]) => (
            <div key={a} className="flex h-[23px] items-center">
              <span className="w-[35px]">手数:</span>
              <Field label={`手数${a}起`} value={a} size="w-[25px]" />
              <span className="w-[25px] text-center">to</span>
              <Field label={`手数至${b}`} value={b} size="w-[30px]" />
              <span className="w-[45px] pl-[8px]">点数:</span>
              <Field label={`点数${a}`} value="10000" size="w-[35px]" />
              <span className="w-[50px] pl-[7px]">盈利$:</span>
              <Field label={`盈利${a}`} value={p} size="w-[35px]" />
            </div>
          ))}
        </div>
      </section>
    </>
  );
}

/* ---------- chart ---------- */

function Chart() {
  return (
    <div className="grid min-h-0 flex-1 grid-cols-[minmax(0,1fr)_55px] grid-rows-[minmax(0,1fr)_21px] border-l border-[#696969] bg-black pt-[2px] pl-[2px] font-[family-name:'Liberation_Sans',sans-serif] text-[10px] text-white">
      <div className="relative overflow-hidden border border-white">
        <svg className="absolute inset-0 h-full w-full" shapeRendering="crispEdges">
          <g transform="translate(-337 -87)">
            {bars.map((b) => (
              <rect key={b.x} x={b.x} y={b.a} width="1" height={b.b - b.a} fill={b.up ? '#dc143c' : '#228b22'} />
            ))}
            <rect x="783" y="237" width="1" height="7" fill="#dc143c" />
          </g>
          {orderLines.map(([y]) => (
            <line key={y} x1="0" x2="100%" y1={y - 86.5} y2={y - 86.5} stroke="#32cd32" strokeDasharray="4 3" />
          ))}
          <line x1="0" x2="100%" y1="267.5" y2="267.5" stroke="#c0c0c0" />
          <line x1="0" x2="100%" y1="277.5" y2="277.5" stroke="#c0c0c0" />
          <path d="M1201 0h9l-4.500 5z" fill="#c0c0c0" />
          <g transform="translate(-337 -87)" fill="#fff" shapeRendering="auto">
            {orderLines.map(([y, base, t]) => (
              <text key={y} x="341" y={base} fontSize="10">{t}</text>
            ))}
          </g>
        </svg>
        <h2 className="absolute top-0 left-[3px] whitespace-pre leading-[14px]">BTCUSDc, M1:  Bitcoin vs US Dollar</h2>

        <FloatingPanels />

        <svg className="pointer-events-none absolute inset-0 h-full w-full">
          <g transform="translate(-337 -87)">
            {dealLines.map(([x1, y1, x2, y2, k]) => (
              <line key={`${x1}-${y1}-${x2}`} x1={x1} y1={y1} x2={x2} y2={y2} stroke={k === 'r' ? '#e04020' : '#0064b4'} strokeDasharray="3 3" />
            ))}
            {deals.map(([x, y, k]) => <Marker key={`${x}-${y}`} x={x} y={y} kind={k} />)}
          </g>
        </svg>

        <Popups />

        <nav className="absolute top-[3px] right-[5px] flex w-[100px] flex-col text-xs">
          <div className="mb-[2px] flex h-[15px] items-center justify-end gap-[5px] whitespace-nowrap font-[family-name:'Liberation_Sans',sans-serif] text-[10px]">
            Hedging_EA_v6.0 <CapIcon />
          </div>
          <div className="grid h-5 grid-cols-2 border-t border-l border-[#d3d3d3] bg-[#4682b4]">
            <button className="border-r border-[#d3d3d3] font-[family-name:'Noto_Sans_CJK_SC',sans-serif] leading-none">背景色</button>
            <button className="border-r border-[#d3d3d3] font-[family-name:'Noto_Sans_CJK_SC',sans-serif] leading-none">K线色</button>
          </div>
          {['全局设置', '信息显示', '开仓面板', '平仓面板', '加仓面板', '自动面板', '对冲风控', '帮助手册'].map((t, i) => (
            <button key={t} className={`h-6 border border-[#d3d3d3] bg-[#4682b4] font-[family-name:'Noto_Sans_CJK_SC',sans-serif] leading-none ${i < 7 ? 'border-b-0' : ''}`}>{t}</button>
          ))}
        </nav>

        <ul className="absolute right-[5px] bottom-[4px] w-[90px] border-t border-[#4682b4] text-center text-xs font-bold text-[#ffd700]">
          {['11:37:19', '19:37:20', '165017545', 'ess Technologies', 'SVIP'].map((t) => (
            <li key={t} className={`flex h-[23px] items-center justify-center overflow-hidden border border-t-0 border-[#4682b4] bg-black whitespace-nowrap ${t.length > 12 ? 'text-[10px]' : ''}`}>{t}</li>
          ))}
        </ul>

        {['top-[368px]', 'top-[423px]', 'top-[478px]'].map((top) => (
          <span key={top} className={`pointer-events-none absolute left-[483px] ${top} origin-bottom-left -rotate-12 font-[family-name:'Noto_Sans','Noto_Sans_CJK_SC',sans-serif] text-[25px] font-bold whitespace-nowrap text-[#8c8c8c]/55`}>
            EA邦www.eabang.com
          </span>
        ))}
      </div>

      <div className="relative pt-[8px]">
        {priceTicks.map((p) => (
          <div key={p} className="flex h-8 items-start leading-8">
            {p && <span className="flex h-8 items-center before:mr-[2px] before:h-px before:w-[3px] before:bg-white">{p}</span>}
          </div>
        ))}
        <div className="absolute top-[263px] left-[2px] w-[51px] bg-[#c0c0c0] pl-[3px] leading-[10px] text-black">
          <div>102035.06</div>
          <div>102006.05</div>
        </div>
      </div>

      <div className="flex overflow-hidden">
        {timeTicks.map((t) => (
          <span key={t} className="w-16 shrink-0 whitespace-nowrap leading-[14px] before:block before:h-[3px] before:w-px before:bg-white">{t}</span>
        ))}
      </div>
      <div />
    </div>
  );
}

const chartTabs = [
  'XAUUSDc,H1', 'XAUUSDc,M1', 'BTCUSDc,M1', 'EURGBPc,M15', 'AUDCADc,M15', 'EURCHFc,H1', 'EURJPYc,M1', 'EURUSDc,H1',
  'GBPAUDc,H1', 'AUDCHFc,H1', 'GBPUSDc,H1', 'GBPCHFc,H1', 'GBPJPYc,H1', 'NZDUSDc,H1', 'USDCADc,H1', 'USDCHFc,H1',
];

function ChartTabs() {
  return (
    <div className="flex h-[26px] shrink-0 border-l border-[#696969] bg-[#f0f0f0] pt-[3px] pb-[3px] text-xs">
      <div className="flex min-w-0 flex-1 overflow-hidden border-t border-black pr-2 text-[#6e6e6e]">
        <div className="flex min-w-0 flex-1 overflow-hidden pl-px">
          {chartTabs.map((t, i) =>
            i === 2 ? (
              <button key={t} className="h-[20px] w-[101px] shrink-0 border border-t-0 border-black bg-white leading-4 text-black">{t}</button>
            ) : (
              <span key={t} className={`my-[2px] flex shrink-0 items-center ${i === 0 || i === 3 ? '' : 'border-l border-[#606060]'}`}>
                <button className="px-[12px]">{t}</button>
              </span>
            ),
          )}
        </div>
        <div className="flex w-[44px] items-center justify-end gap-4 pl-2">
          <svg width="5" height="8" viewBox="0 0 5 8" fill="#a0a0a0"><path d="M5 0v8L0 4z" /></svg>
          <svg width="5" height="8" viewBox="0 0 5 8" fill="#000"><path d="M0 0v8l5-4z" /></svg>
        </div>
      </div>
    </div>
  );
}

/* ---------- terminal ---------- */

function Terminal() {
  const head = 'border-r border-[#e0e0e0] font-normal';
  const cell = 'border-r border-[#c0c0c0] pr-[3px] text-right';
  return (
    <section className="flex h-[373px] shrink-0 bg-[#f0f0f0] text-xs text-black">
      <div className="flex w-[15px] shrink-0 flex-col items-center">
        <button aria-label="关闭工具箱" className="flex h-[15px] items-center">
          <svg width="6" height="6" viewBox="0 0 6 6" stroke="#000" strokeWidth="1.500"><path d="M.500.500l5 5M5.500.500l-5 5" /></svg>
        </button>
        <div className="flex w-[13px] flex-1 items-end justify-center overflow-hidden bg-linear-to-b from-[#bad0ec] to-[#9ab3d2]">
          <span className="rotate-180 leading-[13px] [writing-mode:vertical-rl]">工具箱</span>
        </div>
      </div>
      <div className="flex min-w-0 flex-1 flex-col">
        <div className="flex min-h-0 flex-1 border-t-2 border-l border-[#a0a0a0] bg-white">
          <div className="min-w-0 flex-1 overflow-hidden">
            <table className="w-full table-fixed border-collapse leading-4">
              <colgroup>
                <col className="w-[171px]" /><col className="w-[119px]" /><col className="w-[140px]" /><col className="w-[132px]" /><col className="w-[132px]" />
                <col className="w-[132px]" /><col className="w-[131px]" /><col className="w-[132px]" /><col className="w-[132px]" /><col className="w-[146px]" />
                <col className="w-[119px]" /><col />
              </colgroup>
              <thead>
                <tr className="h-[25px]">
                  <th className={`${head} pl-[5px] text-left`}><span className="flex items-center gap-[18px]">交易品种 <Caret /></span></th>
                  <th className={`${head} pl-[6px] text-left`}>订单号</th>
                  {['时间', '类型', '交易量', '价位', '止损', '止盈', '价位', '盈利', '幻数', '注释'].map((t, i) => (
                    <th key={i} className={`${head} pr-[5px] text-right`}>{t}</th>
                  ))}
                </tr>
              </thead>
              <tbody>
                {trades.map(([s, id, time, type, open, cur, pl, magic, c], i) => {
                  const sel = id === '107807902';
                  const row = sel ? 'bg-[#0078d7] text-white' : i % 2 ? 'bg-[#ebebeb]' : 'bg-white';
                  const plTone = sel ? '' : pl.startsWith('-') ? 'text-[#ff0000]' : 'text-[#0000ff]';
                  return (
                    <tr key={id} className={`h-[21px] border-b border-[#c0c0c0] ${row}`}>
                      <td className="border-r border-[#c0c0c0]">
                        <span className="flex items-center gap-[6px] pl-[4px]"><DocIcon sell={type === 'sell'} />{s}</span>
                      </td>
                      <td className="border-r border-[#c0c0c0] pl-[4px]">{id}</td>
                      <td className={cell}>{time}</td>
                      <td className={cell}>{type}</td>
                      <td className={cell}>0.01</td>
                      <td className={cell}>{open}</td>
                      <td className={cell} />
                      <td className={cell} />
                      <td className={cell}>{cur}</td>
                      <td className={`border-r border-[#c0c0c0] ${plTone}`}>
                        <span className="flex items-center justify-end gap-2 pr-[5px]">
                          {pl}
                          <button aria-label={`平仓 ${id}`} className="text-[#a0a0a0]">
                            <svg width="10" height="9" viewBox="0 0 10 9" stroke="currentColor" strokeWidth="2"><path d="M1 .500l8 8M9 .500l-8 8" /></svg>
                          </button>
                        </span>
                      </td>
                      <td className={cell}>{magic}</td>
                      <td className="pr-1 text-right">www.eabang.com_He{c}</td>
                    </tr>
                  );
                })}
              </tbody>
            </table>
          </div>
          <div className="flex w-[12px] shrink-0 flex-col items-center bg-[#f0f0f0] py-[7px]">
            <Chevron up />
            <div className="flex w-full flex-1 flex-col">
              <div className="flex-[180]" />
              <div className="flex-[110] bg-[#cdcdcd]" />
              <div className="flex-[33]" />
            </div>
            <Chevron />
          </div>
        </div>
        <div className="flex h-[22px] shrink-0 items-start border-t border-black text-[#707070]">
          <button className="ml-[2px] h-[20px] border border-t-0 border-black bg-white px-[9px] text-black">交易</button>
          {['敞口', '历史', '新闻', '邮箱', '经济日历', '公司', '预警', '文章', '代码库', '专家', '日志'].map((t, i) => (
            <span key={t} className={`mt-[3px] flex h-4 items-center ${i > 0 ? 'border-l border-[#606060]' : ''}`}>
              <button className={`flex items-end ${t === '邮箱' ? 'pr-[10px] pl-[9px]' : i % 2 ? 'px-[9px]' : 'pr-[10px] pl-[9px]'}`}>
                {t}
                {t === '邮箱' && <span className="-mb-1 ml-[2px] text-[10px] font-bold text-[#e02020]">10</span>}
              </button>
            </span>
          ))}
          <div className="ml-auto flex h-[21px] items-center gap-4 pr-[4px] text-black">
            <button className="flex items-center gap-[6px]"><SmallBag />市场</button>
            <button className="-ml-1 flex items-center gap-1">
              <svg width="16" height="12" viewBox="0 0 16 12" fill="none" stroke={BLUE}><circle cx="8" cy="6" r="1.500" fill={PALE} /><path d="M5 3a4 4 0 0 0 0 6M11 3a4 4 0 0 1 0 6M2.500 1a7 7 0 0 0 0 10M13.500 1a7 7 0 0 1 0 10" /></svg>
              信号
            </button>
            <button className="-ml-1 flex items-center gap-1">
              <svg width="16" height="15" viewBox="0 0 16 15" fill={PALE} stroke={BLUE} strokeWidth="1.200"><path d="M4 10a3 3 0 0 1 .500-5 4 4 0 0 1 7.500 0 2.800 2.800 0 0 1 0 5zM8 10v3M2 13.500h12" /></svg>
              VPS
            </button>
            <button className="-ml-1 flex items-center gap-1"><ChipIcon />测试</button>
          </div>
        </div>
      </div>
    </section>
  );
}

/* ---------- page ---------- */

export default function App() {
  return (
    <div className="relative flex h-screen w-full flex-col overflow-hidden bg-[#3a3a3a] font-[family-name:'Noto_Sans','Noto_Sans_CJK_SC',sans-serif]">
      <div className="flex min-h-0 flex-1">
        <div className="flex w-[3px] shrink-0 flex-col border-r border-[#808080] bg-white">
          <div className="mt-1 h-[15px] bg-[#ffe9a0]" />
          <div className="mt-1 h-[22px] bg-[#0060b8]" />
        </div>
        <div className="flex min-w-0 flex-1 flex-col">
          <TitleBar />
          <MenuBar />
          <Toolbar />
          <div className="flex min-h-0 flex-1">
            <aside className="flex w-[330px] shrink-0 flex-col gap-px bg-[#f0f0f0]">
              <MarketWatch />
              <Navigator />
            </aside>
            <div className="flex min-w-0 flex-1 flex-col">
              <Chart />
              <ChartTabs />
            </div>
          </div>
          <Terminal />
        </div>
        <div className="flex w-[9px] shrink-0 flex-col bg-[#f0f0f0]">
          <div className="flex h-[17px] items-center justify-end overflow-hidden"><Chevron up /></div>
          <div className="flex-[937] bg-[#cdcdcd]" />
          <div className="flex-[55]" />
        </div>
      </div>
      <footer className="h-[5px] shrink-0 bg-[#3a3a3a]" />

      <svg className="pointer-events-none absolute inset-0 h-full w-full">
        <defs>
          <linearGradient id="fade" gradientUnits="userSpaceOnUse" x1="1180" y1="305" x2="1080" y2="410">
            <stop offset="0" stopColor="#ff1f14" stopOpacity="0.1" />
            <stop offset="1" stopColor="#ff1f14" />
          </linearGradient>
        </defs>
        <g fill="url(#fade)">
          <path d="M1162 304L1163 305 723 768 719 764z" />
          <path d="M713 774L718 756 729 767z" />
          <path d="M1200 307L1201 308 723 708 719 703z" />
          <path d="M713 712L721 696 730 707z" />
        </g>
      </svg>
    </div>
  );
}
